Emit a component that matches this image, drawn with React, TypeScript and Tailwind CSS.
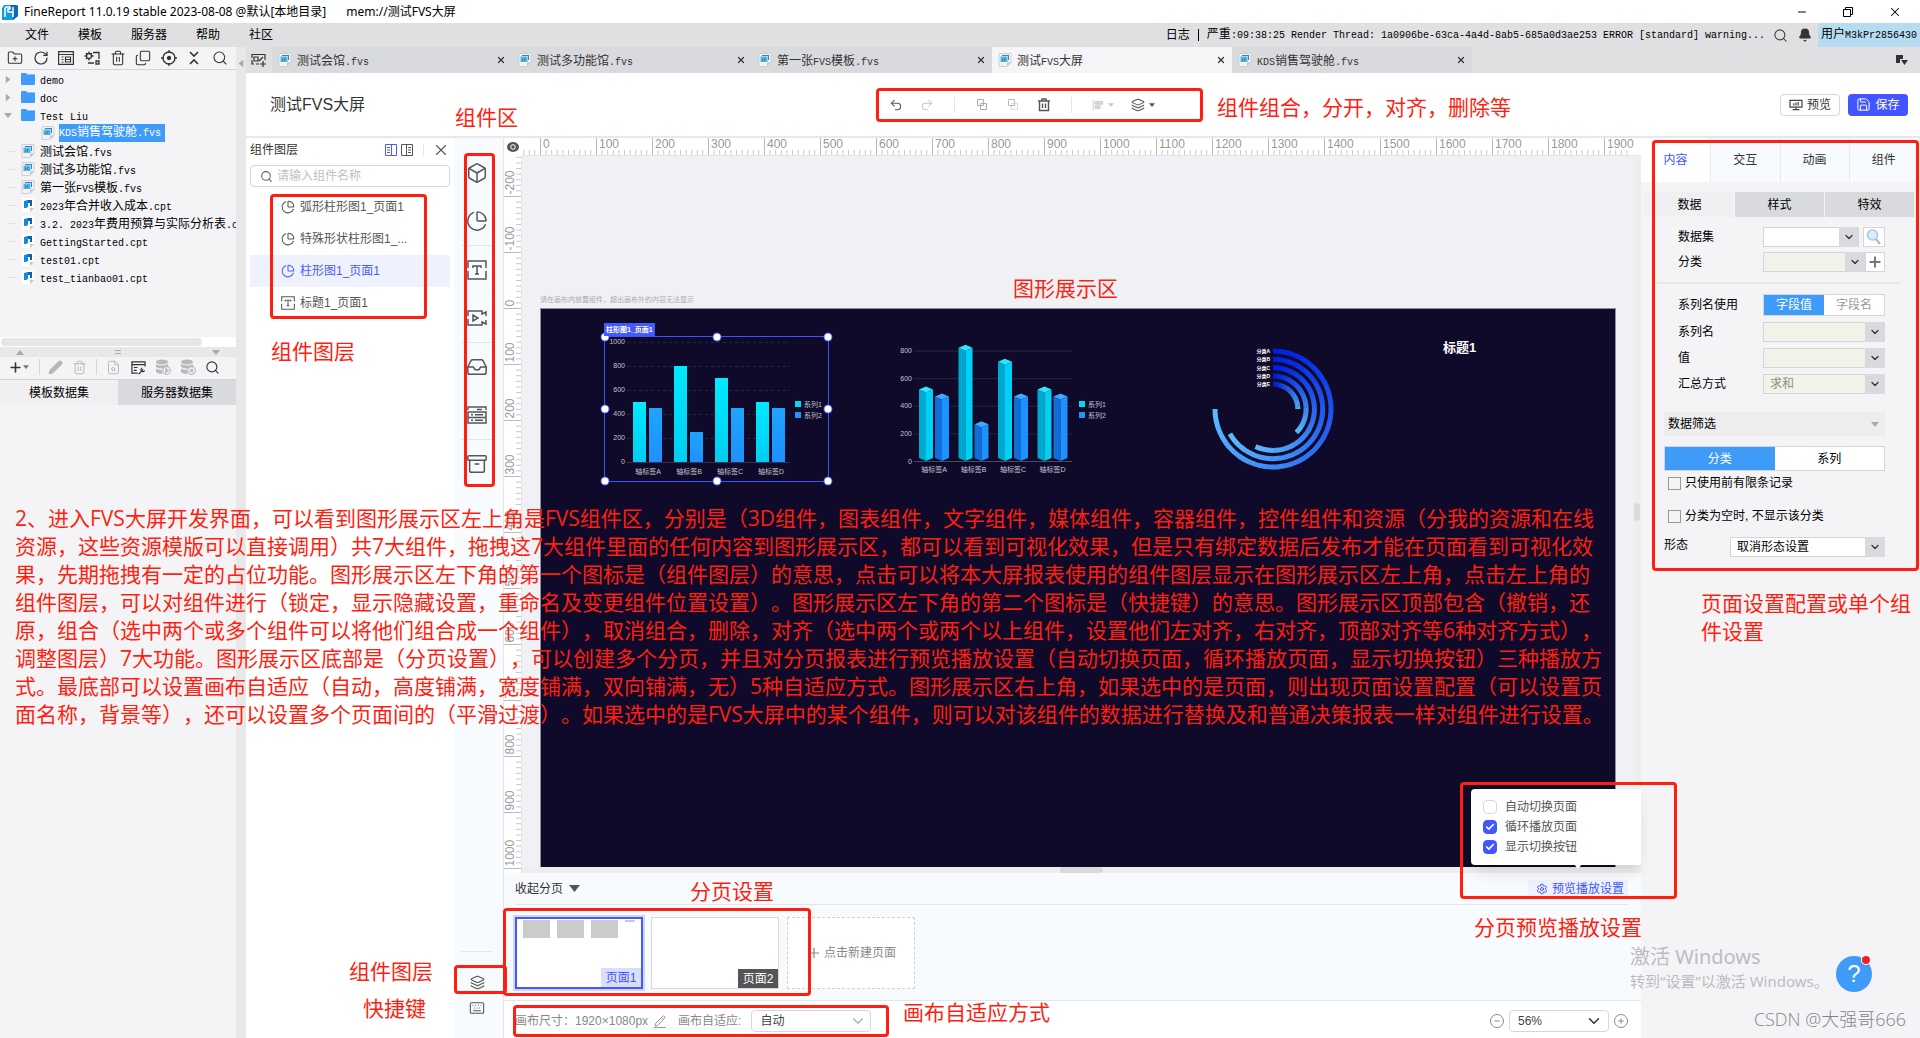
import React from 'react';
import {
  Archive,
  Bell,
  Box,
  Check,
  ChevronDown,
  Copy,
  FileSearch,
  FolderPlus,
  Inbox,
  Layers,
  Keyboard,
  Minus,
  Pencil,
  PieChart,
  Plus,
  Redo2,
  RotateCw,
  Save,
  Search,
  Settings,
  Trash2,
  Undo2,
  X,
} from 'lucide-react';

/* ---------- shared bits ---------- */

// Latin runs are set in a 6px wide mono face next to 12px Chinese glyphs
function Mixed({ text }: { text: string }) {
  const runs = text.match(/[\x20-\x7e]+|[^\x20-\x7e]+/g) ?? [];
  return (
    <span className="whitespace-pre text-xs leading-4">
      {runs.map((run, i) =>
        /^[\x20-\x7e]/.test(run) ? (
          <span key={i} className="font-['Liberation_Mono','DejaVu_Sans_Mono',monospace] text-[10px]">
            {run}
          </span>
        ) : (
          run
        )
      )}
    </span>
  );
}

function Caret({ className }: { className: string }) {
  return (
    <svg viewBox="0 0 8 5" className={className} fill="currentColor">
      <path d="M0 0h8L4 5z" />
    </svg>
  );
}

function FvsIcon() {
  return (
    <svg viewBox="0 0 14 14" className="h-[14px] w-[14px] shrink-0">
      <path d="M1 .5h12v9l-4 4H1z" fill="#f2f2f3" stroke="#cfd0d2" />
      <path d="M9 13.500V9.500h4z" fill="#c5c6c8" />
      <path d="M4 2h7v5h-1V3H4z" fill="#2a86d8" />
      <path d="M2.500 3.500h7v5.500h-7z" fill="#56b0f4" />
      <path d="M4 6h1.200v2H4zM6 5h1.200v3H6z" fill="#3f9b4c" />
    </svg>
  );
}

function CptIcon() {
  return (
    <svg viewBox="0 0 14 14" className="h-[14px] w-[14px] shrink-0">
      <path d="M1 0h12v10l-4 4H1z" fill="#fff" />
      <path d="M9 14v-4h4z" fill="#c5c6c8" />
      <path d="M3 3l4-1v7l-2 1H3z" fill="#1588dc" />
      <path d="M7 2h4v6H9V5H7z" fill="#0a62b4" />
    </svg>
  );
}

function FolderIcon() {
  return (
    <svg viewBox="0 0 14 12" className="h-3 w-[14px] shrink-0">
      <path d="M0 1q0-1 1-1h4l1 1h7q1 0 1 1v9q0 1-1 1H1q-1 0-1-1z" fill="#3f9bf8" />
      <path d="M6 1.500h8" stroke="#8ac4fc" />
    </svg>
  );
}

interface DropdownProps {
  label: string;
  value?: string;
  className: string;
  tone?: string;
}

function Dropdown({ label, value = '', className, tone = 'bg-white text-black' }: DropdownProps) {
  return (
    <div className={`relative h-5 ${className}`}>
      <select
        aria-label={label}
        className={`h-5 w-full appearance-none border border-[#d4d5d8] pl-1.5 text-xs leading-4 ${tone}`}
      >
        <option>{value}</option>
      </select>
      <span className="pointer-events-none absolute inset-y-0 right-0 flex w-5 items-center justify-center bg-[#d9dadd]">
        <ChevronDown className="h-3 w-3 text-[#333]" strokeWidth={2.5} />
      </span>
    </div>
  );
}

/* ---------- top bars ---------- */

function TitleBar() {
  return (
    <div className="flex h-[23px] shrink-0 items-center bg-white font-['Noto_Sans','Noto_Sans_CJK_SC',sans-serif] text-xs leading-4 text-black">
      <svg viewBox="0 0 16 16" className="ml-0.5 h-4 w-4">
        <path d="M2 1h12q2 0 2 2v9l-5 4H0V4z" fill="#129be0" />
        <path d="M8 1h6q2 0 2 2v9l-5 4V8H8z" fill="#0b67b8" />
        <path d="M3 13V5q0-2 2-2h3v2H6v3h5v5M11 3v5" fill="none" stroke="#fff" strokeWidth="1.500" />
      </svg>
      <span className="ml-1.5">FineReport 11.0.19 stable 2023-08-08 @默认[本地目录]</span>
      <span className="ml-5">mem://测试FVS大屏</span>
      <div className="ml-auto flex items-center gap-[34px] pr-[18px]">
        <button aria-label="最小化">
          <Minus className="h-3 w-3" strokeWidth={2} />
        </button>
        <button aria-label="还原">
          <svg viewBox="0 0 12 12" className="h-3 w-3" fill="none" stroke="#000">
            <path d="M1.500 3.500h7v7h-7zM3.500 3.500v-2h7v7h-2" />
          </svg>
        </button>
        <button aria-label="关闭">
          <X className="h-[14px] w-[14px]" strokeWidth={1.8} />
        </button>
      </div>
    </div>
  );
}

const menus = ['文件', '模板', '服务器', '帮助', '社区'];

function MenuBar() {
  return (
    <div className="flex h-6 shrink-0 items-center bg-[#e0e0e2] text-xs leading-4 text-black">
      <nav className="flex gap-[29px] pl-[25px]">
        {menus.map((m) => (
          <button key={m}>{m}</button>
        ))}
      </nav>
      <div className="ml-auto flex h-6 items-center">
        <span>日志</span>
        <span className="mx-2 h-3 w-px bg-black" />
        <span>
          <Mixed text="严重:09:38:25 Render Thread: 1a0906be-63ca-4a4d-8ab5-685a0d3ae253 ERROR [standard] warning..." />
        </span>
        <Search className="ml-2 h-[15px] w-[15px] text-[#444]" strokeWidth={1.8} />
        <Bell className="ml-2.5 h-[14px] w-[14px] text-[#333]" fill="#333" />
        <span className="ml-1.5 flex h-6 items-center bg-[#b7dcf2] px-[3px]">
          <Mixed text="用户M3kPr2856430" />
        </span>
      </div>
    </div>
  );
}

const tabs = ['测试会馆.fvs', '测试多功能馆.fvs', '第一张FVS模板.fvs', '测试FVS大屏', 'KDS销售驾驶舱.fvs'];

function FileTabs() {
  return (
    <div className="flex h-[26px] shrink-0 bg-[#e0e0e2] text-[#333]">
      <button aria-label="新建" className="flex w-[26px] items-center justify-center">
        <svg viewBox="0 0 16 14" className="h-[14px] w-4" fill="none" stroke="#333" strokeWidth="1.200">
          <path d="M1 5V1.500h13V7M1 7v4h2M5 11h3M3 4h4v4H3zM8 8l4-4M9 11h6M12 8v6" />
        </svg>
      </button>
      {tabs.map((t, i) => (
        <div
          key={t}
          className={`flex w-60 items-center pl-1.5 pr-1.5 ${i === 3 ? 'bg-[#f5f5f7]' : 'bg-[#d9dadd]'}`}
        >
          <FvsIcon />
          <span className="ml-[5px]">
            <Mixed text={t} />
          </span>
          <button aria-label={`关闭 ${t}`} className="ml-auto">
            <X className="h-2.5 w-2.5" strokeWidth={3} />
          </button>
        </div>
      ))}
      <div className="ml-auto flex items-center pr-3">
        <svg viewBox="0 0 12 10" className="h-2.5 w-3" fill="#333">
          <path d="M0 0h7v4H4v4H0zM5 5h7l-3.500 5z" />
        </svg>
      </div>
    </div>
  );
}

/* ---------- left column ---------- */

const tree = [
  { name: 'demo', kind: 'folder', open: false },
  { name: 'doc', kind: 'folder', open: false },
  { name: 'Test Liu', kind: 'folder', open: true },
  { name: 'KDS销售驾驶舱.fvs', kind: 'child' },
  { name: '测试会馆.fvs', kind: 'fvs' },
  { name: '测试多功能馆.fvs', kind: 'fvs' },
  { name: '第一张FVS模板.fvs', kind: 'fvs' },
  { name: '2023年合并收入成本.cpt', kind: 'cpt' },
  { name: '3.2. 2023年费用预算与实际分析表.cpt', kind: 'cpt' },
  { name: 'GettingStarted.cpt', kind: 'cpt' },
  { name: 'test01.cpt', kind: 'cpt' },
  { name: 'test_tianbao01.cpt', kind: 'cpt' },
];

function TreeRow({ item }: { item: (typeof tree)[number] }) {
  if (item.kind === 'child') {
    return (
      <li className="flex h-[18px] items-center pl-[41px]">
        <FvsIcon />
        <span className="ml-1 flex h-[18px] items-center bg-[#3f9bf8] pr-1 text-white">
          <Mixed text={item.name} />
        </span>
      </li>
    );
  }
  return (
    <li className="flex h-[18px] items-center overflow-hidden pl-1">
      <span className="flex w-[17px] shrink-0 items-center">
        {item.kind === 'folder' ? (
          <Caret className={item.open ? 'h-[5px] w-2 text-[#aaa]' : 'h-[5px] w-2 -rotate-90 text-[#aaa]'} />
        ) : (
          <span className="ml-1 h-px w-2 bg-[#e2e2e4]" />
        )}
      </span>
      {item.kind === 'folder' && <FolderIcon />}
      {item.kind === 'fvs' && <FvsIcon />}
      {item.kind === 'cpt' && <CptIcon />}
      <span className="ml-[5px]">
        <Mixed text={item.name} />
      </span>
    </li>
  );
}

function DatabaseGlyph({ mark }: { mark: string }) {
  return (
    <svg viewBox="0 0 16 16" className="h-4 w-4">
      <ellipse cx="7" cy="3" rx="6" ry="2.500" fill="#b8b8ba" />
      <path d="M1 5q6 3 12 0v2.500q-3 0-5 2-4 0-7-1.500zM1 9.500q3 1.500 6 1.500-.5 2 .5 4Q3 15 1 13z" fill="#b8b8ba" />
      <circle cx="11.500" cy="11.500" r="3.800" fill="#f4f4f6" stroke="#b8b8ba" strokeWidth="1.200" />
      <path d={mark} fill="none" stroke="#b8b8ba" strokeWidth="1.300" />
    </svg>
  );
}

function LeftColumn() {
  const icon = 'h-4 w-4 text-[#333]';
  const dim = 'h-[15px] w-[15px] text-[#b8b8ba]';
  return (
    <aside className="flex w-[236px] shrink-0 flex-col bg-[#f4f4f6] text-black">
      <div className="flex h-[23px] shrink-0 items-center justify-between border-b border-[#d2d3d6] pl-[7px] pr-2">
        <FolderPlus className={icon} strokeWidth={1.6} />
        <RotateCw className={icon} strokeWidth={1.8} />
        <svg viewBox="0 0 16 16" className={icon} fill="none" stroke="currentColor" strokeWidth="1.200">
          <path d="M.6 1.600h14.800v12.800H.6zM.6 4.500h14.800M3.500 7h2M3.500 9.500h2M3.500 12h2M7.500 7h5v5h-5zM7.500 9.500h5" />
        </svg>
        <svg viewBox="0 0 16 16" className={icon} fill="none" stroke="currentColor" strokeWidth="1.300">
          <circle cx="5" cy="6" r="2.500" />
          <path d="M5 1.500v2M5 8.500v2M.5 6h2M7.500 6h2M2 3l1 1M8 3 7 4M2 9l1-1M9 2.500h6V9M4 13h6M12 11h3v3h-3z" />
        </svg>
        <Trash2 className={icon} strokeWidth={1.6} />
        <Copy className="h-4 w-4 -scale-y-100 text-[#333]" strokeWidth={1.6} />
        <svg viewBox="0 0 16 16" className={icon} fill="none" stroke="currentColor" strokeWidth="1.300">
          <circle cx="8" cy="8" r="6" />
          <circle cx="8" cy="8" r="1.500" fill="currentColor" />
          <path d="M8 0v3M8 13v3M0 8h3M13 8h3" />
        </svg>
        <svg viewBox="0 0 16 16" className={icon} fill="none" stroke="currentColor" strokeWidth="1.600">
          <path d="m4 2 4 4 4-4M4 14l4-4 4 4" />
        </svg>
        <Search className={icon} strokeWidth={1.6} />
      </div>
      <ul className="h-[267px] shrink-0 overflow-hidden">
        {tree.map((item) => (
          <TreeRow key={item.name} item={item} />
        ))}
      </ul>
      <div className="flex h-2.5 shrink-0 items-center bg-white px-px">
        <span className="h-2 w-[201px] rounded bg-[#e6e6e7]" />
      </div>
      <div className="flex h-2.5 shrink-0 items-center justify-between bg-[#e8e8e8] px-4 text-[#aaa]">
        <Caret className="h-[5px] w-2 rotate-180" />
        <span className="h-1 w-1.5 border-y border-[#aaa]" />
        <Caret className="h-[5px] w-2" />
      </div>
      <div className="flex h-[23px] shrink-0 items-center border-b border-[#d2d3d6] pb-0.5 pl-2">
        <Plus className="h-[15px] w-[15px] text-[#333]" strokeWidth={2.5} />
        <Caret className="h-1 w-1.5 text-[#777]" />
        <span className="ml-2.5 h-4 w-px bg-[#d6d6d8]" />
        <div className="flex flex-1 items-center justify-between pl-2 pr-4">
          <Pencil className={dim} fill="#b8b8ba" />
          <Trash2 className={dim} strokeWidth={1.6} />
          <span className="h-4 w-px bg-[#d6d6d8]" />
          <FileSearch className={dim} strokeWidth={1.6} />
          <svg viewBox="0 0 16 16" className="h-[15px] w-[15px] text-[#333]" fill="none" stroke="currentColor" strokeWidth="1.300">
            <path d="M15 7V2H1v12h6M1 5h14M3 8h4M3 11h3" />
            <path d="m9 14 4-4M12 8.500a2 2 0 1 0 2.500 2.500M8 15l2-1" />
          </svg>
          <DatabaseGlyph mark="M10.700 9.800v3.400l2.300-1.700z" />
          <DatabaseGlyph mark="m10 10 3 3M13 10l-3 3" />
          <Search className="h-[15px] w-[15px] text-[#333]" strokeWidth={1.8} />
        </div>
      </div>
      <div className="grid h-[25px] shrink-0 grid-cols-2 text-xs leading-4">
        <button className="bg-[#f0f0f2]">模板数据集</button>
        <button className="bg-[#d9dadd]">服务器数据集</button>
      </div>
    </aside>
  );
}

/* ---------- designer header ---------- */

function DesignerHeader() {
  return (
    <header className="flex h-[65px] shrink-0 items-center border-b-2 border-[#e6e8ed] bg-white pl-6 pr-3">
      <h1 className="w-[619px] shrink-0 text-base leading-6 text-[#333]">测试FVS大屏</h1>
      <div className="flex items-center gap-[17px] text-[#c8c8ca]">
        <Undo2 className="h-[14px] w-[14px] text-[#555]" strokeWidth={1.8} />
        <Redo2 className="h-[14px] w-[14px]" strokeWidth={1.8} />
        <span className="mx-[3px] h-4 w-px bg-[#e4e4e6]" />
        <svg viewBox="0 0 14 14" className="h-[14px] w-[14px]" fill="none" stroke="#aaa">
          <path d="M2.500 1.500h6v6h-6zM5.500 5.500h6v6h-6z" />
        </svg>
        <svg viewBox="0 0 14 14" className="h-[14px] w-[14px]" fill="none" stroke="#bbb">
          <path d="M2.500 1.500h6v6h-6z" />
          <path d="M5.500 5.500h6v6h-6z" strokeDasharray="1 1" />
        </svg>
        <svg viewBox="0 0 14 14" className="h-[14px] w-[14px]" fill="none" stroke="#555" strokeWidth="1.400">
          <path d="M1 3h12M5 3V1h4v2M2.500 3v9.500h9V3M5.500 5.500V10M8.500 5.500V10" />
        </svg>
        <span className="mx-[3px] h-4 w-px bg-[#e4e4e6]" />
        <span className="flex items-center gap-1">
          <svg viewBox="0 0 14 14" className="h-3 w-3" fill="#d8d8da" stroke="#c8c8ca">
            <path d="M1.500 1v12M3.500 3h9v3h-9zM3.500 8h6v3h-6z" />
          </svg>
          <Caret className="h-1 w-1.5" />
        </span>
        <span className="flex items-center gap-1 text-[#555]">
          <Layers className="h-[14px] w-[14px]" strokeWidth={1.8} />
          <Caret className="h-1 w-1.5" />
        </span>
      </div>
      <div className="ml-auto flex gap-2 text-xs leading-4">
        <button className="flex h-[22px] w-[60px] items-center justify-center gap-1 rounded-sm border border-[#d6d7da] bg-white text-[#333]">
          <svg viewBox="0 0 16 14" className="h-3 w-[14px]" fill="none" stroke="#444" strokeWidth="1.400">
            <path d="M1 1.500h14v8H1zM4 12.500h8M8 10v2M5.500 5v2.500M8 4v3.500M10.500 3.500v4" />
          </svg>
          预览
        </button>
        <button className="flex h-[22px] w-[60px] items-center justify-center gap-1 rounded-sm bg-[#4255ff] text-white">
          <Save className="h-[15px] w-[15px]" strokeWidth={1.6} />
          保存
        </button>
      </div>
    </header>
  );
}

/* ---------- layer panel and component bar ---------- */

const layers = ['弧形柱形图1_页面1', '特殊形状柱形图1_...', '柱形图1_页面1', '标题1_页面1'];

function TextGlyph({ className }: { className: string }) {
  return (
    <svg viewBox="0 0 20 20" className={className} fill="none" stroke="currentColor" strokeWidth="1.500">
      <path d="M1 8V1h18v7M1 11v8h18v-8M6 8V6h8v2M10 6v8M8 14h4" />
    </svg>
  );
}

function LayerPanel() {
  return (
    <section className="w-[208px] shrink-0 bg-white px-1 text-xs leading-4">
      <div className="flex h-[27px] items-center pb-1">
        <h2 className="text-[#333]">组件图层</h2>
        <svg viewBox="0 0 12 12" className="ml-auto h-3 w-3" fill="none" stroke="#4a5cff">
          <path d="M.5.5h11v11H.5zM6.500 1v10M2 3.500h3M2 6h3M2 8.500h3" />
        </svg>
        <svg viewBox="0 0 12 12" className="ml-1 h-3 w-3" fill="none" stroke="#555">
          <path d="M.5.5h11v11H.5zM5.500 1v10M7 3.500h3M7 6h3M7 8.500h3" />
        </svg>
        <span className="ml-2.5 h-3 w-px bg-[#e6e6e8]" />
        <button aria-label="关闭图层" className="ml-2">
          <X className="h-[18px] w-[18px] text-[#555]" strokeWidth={1.5} />
        </button>
      </div>
      <label className="flex h-[22px] items-center rounded-sm border border-[#d6d7da] pl-[9px]">
        <Search className="h-[13px] w-[13px] text-[#666]" strokeWidth={2} />
        <input
          aria-label="组件名称"
          placeholder="请输入组件名称"
          className="ml-1 w-40 text-xs leading-4 outline-none placeholder:text-[#bfbfc2]"
        />
      </label>
      <ul className="mt-1">
        {layers.map((name, i) => (
          <li
            key={name}
            className={`flex h-8 items-center gap-[5px] pl-[31px] ${
              i === 2 ? 'bg-[#eff2fd] text-[#4a5cff]' : 'text-[#555]'
            }`}
          >
            {i === 3 ? (
              <TextGlyph className="h-[14px] w-[14px]" />
            ) : (
              <PieChart className="h-[14px] w-[14px]" strokeWidth={1.8} />
            )}
            {name}
          </li>
        ))}
      </ul>
    </section>
  );
}

function VideoGlyph() {
  return (
    <svg viewBox="0 0 20 20" className="h-5 w-5" fill="none" stroke="currentColor" strokeWidth="1.500">
      <path d="M1 8V3h14v3l4-2v4M1 11v6h14v-3l4 2v-4M6 7v6l5-3z" />
    </svg>
  );
}

function ControlGlyph() {
  return (
    <svg viewBox="0 0 20 20" className="h-5 w-5" fill="none" stroke="currentColor" strokeWidth="1.500">
      <path d="M1 5V2h18v3M1 7h18v5.500H1zM1 12.500h18V18H1zM10 4.500h5M4 9.700h2M8 9.700h8M4 15.200h2M8 15.200h8" />
    </svg>
  );
}

const groups = [
  [<Box className="h-[22px] w-[22px]" strokeWidth={1.6} />, <PieChart className="h-[22px] w-[22px]" strokeWidth={1.6} />],
  [<TextGlyph className="h-5 w-5" />, <VideoGlyph />],
  [<Inbox className="h-[22px] w-[22px]" strokeWidth={1.6} />, <ControlGlyph />],
  [<Archive className="h-[22px] w-[22px]" strokeWidth={1.6} />],
];
const groupNames = [
  ['3D组件', '图表组件'],
  ['文字组件', '媒体组件'],
  ['容器组件', '控件组件'],
  ['资源'],
];

function ComponentBar() {
  return (
    <nav className="flex w-[50px] shrink-0 flex-col border-r border-[#e2e6ec] bg-[#f7fbfe] pl-[7px] pr-2.5 pt-[11px] text-[#555]">
      {groups.map((icons, g) => (
        <div key={g} className="border-b border-[#e4e7ea] last-of-type:border-0">
          {icons.map((glyph, i) => (
            <button key={i} aria-label={groupNames[g][i]} className="flex h-12 w-full items-center justify-center">
              {glyph}
            </button>
          ))}
        </div>
      ))}
      <footer className="mt-auto flex h-[87px] flex-col items-center border-t border-[#e4e7ea] pt-[23px]">
        <button aria-label="组件图层">
          <Layers className="h-[15px] w-[15px]" strokeWidth={1.8} />
        </button>
        <button aria-label="快捷键" className="mt-2.5">
          <Keyboard className="h-4 w-4" strokeWidth={1.6} />
        </button>
      </footer>
    </nav>
  );
}

/* ---------- rulers ---------- */

const STEP = 56;

function TopRuler() {
  const majors = Array.from({ length: 20 }, (_, i) => i);
  const minors = Array.from({ length: 198 }, (_, i) => i - 3);
  return (
    <svg className="h-[18px] min-w-0 flex-1 border-b border-[#e2e5ea] bg-white">
      {minors.map((m) => (
        <path key={m} d={`M${18.5 + (m * STEP) / 10} 12v6`} stroke="#c8c9cb" />
      ))}
      {majors.map((m) => (
        <g key={m}>
          <path d={`M${18.5 + m * STEP} 0v18`} stroke="#b9babd" />
          <text x={21 + m * STEP} y="10" fontSize="12" fill="#999">
            {m * 100}
          </text>
        </g>
      ))}
    </svg>
  );
}

function SideRuler() {
  const majors = Array.from({ length: 13 }, (_, i) => i - 2);
  const minors = Array.from({ length: 127 }, (_, i) => i - 27);
  return (
    <svg className="w-[18px] shrink-0 border-r border-[#e2e5ea] bg-white">
      {minors.map((m) => (
        <path key={m} d={`M12 ${152.5 + (m * STEP) / 10}h6`} stroke="#c8c9cb" />
      ))}
      {majors.map((m) => {
        const y = 152.5 + m * STEP;
        return (
          <g key={m}>
            <path d={`M0 ${y}h18`} stroke="#b9babd" />
            <text transform={`translate(10 ${y - 2}) rotate(-90)`} fontSize="12" fill="#999">
              {m * 100}
            </text>
          </g>
        );
      })}
    </svg>
  );
}

/* ---------- charts on the stage ---------- */

const axis = ['A', 'B', 'C', 'D'];
const series = [
  [500, 450],
  [800, 250],
  [700, 450],
  [500, 450],
];

function Legend({ x, y }: { x: number; y: number }) {
  return (
    <g fontSize="7" fill="#c4c3ce">
      <rect x={x} y={y} width="6" height="6" fill="#00d8f4" />
      <rect x={x} y={y + 11} width="6" height="6" fill="#1e96fa" />
      <text x={x + 9} y={y + 6}>系列1</text>
      <text x={x + 9} y={y + 17}>系列2</text>
    </g>
  );
}

function BarChart() {
  return (
    <svg viewBox="0 0 225 146" className="h-[146px] w-[225px]">
      <defs>
        <linearGradient id="cyan" x1="0" y1="0" x2="0" y2="1">
          <stop offset="0" stopColor="#00eaff" />
          <stop offset="1" stopColor="#00cdf2" />
        </linearGradient>
        <linearGradient id="blue" x1="0" y1="0" x2="0" y2="1">
          <stop offset="0" stopColor="#1ea5fa" />
          <stop offset="1" stopColor="#1e90ff" />
        </linearGradient>
      </defs>
      {[0, 200, 400, 600, 800, 1000].map((v) => {
        const y = 126 - v * 0.12;
        return (
          <g key={v}>
            <path d={`M23 ${y + 0.5}h163`} stroke={v ? '#1d2b41' : '#2e3350'} strokeDasharray={v ? '3 3' : undefined} />
            <text x="21" y={y + 2} fontSize="7" fill="#c4c3ce" textAnchor="end">
              {v}
            </text>
          </g>
        );
      })}
      {series.map(([a, b], i) => (
        <g key={i}>
          <rect x={29 + i * 41} y={126 - a * 0.12} width="13" height={a * 0.12} fill="url(#cyan)" />
          <rect x={45 + i * 41} y={126 - b * 0.12} width="13" height={b * 0.12} fill="url(#blue)" />
          <text x={44 + i * 41} y="138" fontSize="7" fill="#c4c3ce" textAnchor="middle">
            {`轴标签${axis[i]}`}
          </text>
        </g>
      ))}
      <Legend x={191} y={65} />
    </svg>
  );
}

function Prism({ x, top, shades }: { x: number; top: number; shades: string[] }) {
  const m = x + 7;
  return (
    <g>
      <path d={`M${x} ${top + 3}L${m} ${top + 6}V121L${x} 118z`} fill={shades[0]} />
      <path d={`M${m} ${top + 6}L${x + 14} ${top + 3}V118L${m} 121z`} fill={shades[1]} />
      <path d={`M${x} ${top + 3}L${m} ${top}L${x + 14} ${top + 3}L${m} ${top + 6}z`} fill={shades[2]} />
    </g>
  );
}

function PrismChart() {
  return (
    <svg viewBox="0 0 210 136" className="h-[136px] w-[210px]">
      {[0, 200, 400, 600, 800].map((v) => {
        const y = 121.5 - v * 0.138;
        return (
          <g key={v}>
            <path d={`M14 ${y}h158`} stroke={v ? '#25263f' : '#4b4a60'} />
            <text x="12" y={y + 2} fontSize="7" fill="#c4c3ce" textAnchor="end">
              {v}
            </text>
          </g>
        );
      })}
      {series.map(([a, b], i) => (
        <g key={i}>
          <Prism x={19 + i * 39.5} top={116 - a * 0.139} shades={['#00a8cf', '#00d0f5', '#2fe6ff']} />
          <Prism x={35 + i * 39.5} top={116 - b * 0.139} shades={['#0f6fd6', '#1e90ff', '#43a8ff']} />
          <text x={34 + i * 39.5} y="132" fontSize="7" fill="#c4c3ce" textAnchor="middle">
            {`轴标签${axis[i]}`}
          </text>
        </g>
      ))}
      <Legend x={179} y={61} />
    </svg>
  );
}

const rings = [
  { name: '分类A', r: 58, sweep: 270 },
  { name: '分类B', r: 49.7, sweep: 240 },
  { name: '分类C', r: 41.4, sweep: 205 },
  { name: '分类D', r: 33.1, sweep: 135 },
  { name: '分类E', r: 24.8, sweep: 90 },
];

function RingChart() {
  const slices = 45;
  const point = (r: number, deg: number) => {
    const a = (deg * Math.PI) / 180;
    return `${61 + r * Math.sin(a)} ${61 - r * Math.cos(a)}`;
  };
  return (
    <svg viewBox="0 0 122 122" className="h-[122px] w-[122px]">
      {rings.map(({ name, r, sweep }) => (
        <g key={name}>
          {Array.from({ length: slices }, (_, i) => {
            const from = (sweep * i) / slices;
            const to = Math.min(sweep, (sweep * (i + 1)) / slices + 0.5);
            const t = i / (slices - 1);
            const color = `rgb(${Math.round(90 * t)}, ${Math.round(30 + 158 * t)}, ${Math.round(225 + 30 * t)})`;
            return (
              <path key={i} d={`M${point(r, from)}A${r} ${r} 0 0 1 ${point(r, to)}`} fill="none" stroke={color} strokeWidth="5" />
            );
          })}
          <text x="58" y={63 - r} fontSize="5" fontWeight="700" fill="#fff" textAnchor="end">
            {name}
          </text>
        </g>
      ))}
    </svg>
  );
}

const handles = [
  'left-0 top-0',
  'left-1/2 top-0',
  'left-full top-0',
  'left-0 top-1/2',
  'left-full top-1/2',
  'left-0 top-full',
  'left-1/2 top-full',
  'left-full top-full',
];

function Stage() {
  return (
    <div className="flex min-w-0 flex-1 flex-col bg-[#f0f1f5] px-[18px]">
      <p className="flex h-[152px] shrink-0 items-end whitespace-nowrap pb-0.5 text-[7px] leading-3 text-[#aaabb0]">
        请在画布内放置组件，超出画布外的内容无法显示
      </p>
      <div className="relative flex-1 border border-b-0 border-[#8f8fa0] bg-[#0f0a29]">
        <div className="absolute left-[63px] top-[27px]">
          <BarChart />
          <div className="absolute inset-0 border border-[#4253f0]">
            {handles.map((pos) => (
              <span key={pos} className={`absolute h-[7px] w-[7px] -translate-1/2 rounded-full bg-white ring-1 ring-[#4459fb] ${pos}`} />
            ))}
          </div>
          <span className="absolute -top-[13px] left-0 flex h-[13px] items-center whitespace-nowrap bg-[#4459fb] px-0.5 text-[7px] font-bold leading-3 text-white">
            柱形图1_页面1
          </span>
        </div>
        <div className="absolute left-[359px] top-[31px]">
          <PrismChart />
        </div>
        <div className="absolute left-[671px] top-[39px]">
          <RingChart />
        </div>
        <p className="absolute left-[902px] top-[29px] text-[13px] font-bold leading-5 text-white">标题1</p>
      </div>
    </div>
  );
}

/* ---------- pages strip and footer ---------- */

const playOptions = [
  { label: '自动切换页面', on: false },
  { label: '循环播放页面', on: true },
  { label: '显示切换按钮', on: true },
];

function PlayPopup() {
  return (
    <div className="absolute -top-[84px] right-0 h-[76px] w-[170px] rounded-l-sm bg-white pl-3 pt-2 text-xs leading-4 text-[#555] shadow-lg">
      {playOptions.map(({ label, on }) => (
        <label key={label} className="flex h-5 items-center gap-2">
          <span className="relative flex h-[14px] w-[14px]">
            <input
              type="checkbox"
              defaultChecked={on}
              className="h-[14px] w-[14px] appearance-none rounded-sm border border-[#d6d7da] checked:border-[#4255ff] checked:bg-[#4255ff]"
            />
            {on && <Check className="pointer-events-none absolute inset-0.5 h-2.5 w-2.5 text-white" strokeWidth={4} />}
          </span>
          {label}
        </label>
      ))}
      <Caret className="absolute -bottom-1 left-[103px] h-[5px] w-2 text-white" />
    </div>
  );
}

function PagesStrip() {
  return (
    <div className="relative h-[128px] shrink-0 border-b border-[#e2e5ea] bg-[#f7fbfe] pl-[11px] pr-[13px] text-xs leading-4">
      <div className="flex h-8 items-center border-b border-[#e2e5ea]">
        <button className="flex items-center gap-1.5 text-[#333]">
          收起分页
          <Caret className="h-[7px] w-[11px] text-[#555]" />
        </button>
        <button className="ml-auto flex h-[18px] w-[100px] items-center justify-end gap-1 bg-[#eff2fd] pr-1 text-[#4255ff]">
          <Settings className="h-3 w-3" strokeWidth={2} />
          预览播放设置
        </button>
      </div>
      <div className="mt-3 flex gap-2">
        <div className="flex h-[72px] w-32 flex-col justify-between border-2 border-[#4459fb] bg-white ring-2 ring-[#cfd5fd]">
          <div className="flex items-start gap-[7px] pl-1.5 pt-px">
            <span className="h-[18px] w-[27px] bg-[#cbcbcb]" />
            <span className="h-[18px] w-[27px] bg-[#cbcbcb]" />
            <span className="h-[18px] w-[27px] bg-[#cbcbcb]" />
            <span className="h-0.5 w-2.5 bg-[#cbcbcb]" />
          </div>
          <span className="flex h-[19px] w-10 items-center justify-center self-end bg-[#d9defe] text-[#4255ff]">页面1</span>
        </div>
        <div className="flex h-[72px] w-32 items-end justify-end border border-[#d6d7da] bg-white">
          <span className="flex h-[19px] w-10 items-center justify-center bg-[#555] text-white">页面2</span>
        </div>
        <button className="flex h-[72px] w-32 items-center justify-center gap-0.5 border border-dashed border-[#d0d1d4] bg-white text-[#888]">
          <Plus className="h-4 w-4" strokeWidth={1.8} />
          点击新建页面
        </button>
      </div>
      <PlayPopup />
    </div>
  );
}

function CanvasFooter() {
  return (
    <div className="flex h-[37px] shrink-0 items-center bg-white pb-px pl-[11px] pr-[13px] pt-1 text-xs leading-4 text-[#888]">
      <span className="whitespace-nowrap">画布尺寸：1920×1080px</span>
      <button aria-label="编辑尺寸" className="ml-1.5 border-b border-[#999]">
        <Pencil className="h-3 w-3" strokeWidth={1.8} />
      </button>
      <label htmlFor="fit" className="ml-3 whitespace-nowrap">画布自适应:</label>
      <div className="relative ml-2.5">
        <select id="fit" className="h-[22px] w-[120px] appearance-none rounded-sm border border-[#d6d7da] bg-white pl-2 text-xs leading-4 text-[#444]">
          <option>自动</option>
        </select>
        <ChevronDown className="pointer-events-none absolute right-1 top-0.5 h-[18px] w-[18px] text-[#aaa]" strokeWidth={1.5} />
      </div>
      <div className="ml-auto flex items-center gap-[5px]">
        <button aria-label="缩小" className="flex h-[14px] w-[14px] items-center justify-center rounded-full border border-[#888]">
          <Minus className="h-2 w-2" strokeWidth={3} />
        </button>
        <div className="relative">
          <select aria-label="缩放" className="h-[22px] w-[100px] appearance-none rounded-sm border border-[#d6d7da] bg-white pl-2 text-xs leading-4 text-[#444]">
            <option>56%</option>
          </select>
          <ChevronDown className="pointer-events-none absolute right-1.5 top-0.5 h-[18px] w-[18px] text-[#333]" strokeWidth={2} />
        </div>
        <button aria-label="放大" className="flex h-[14px] w-[14px] items-center justify-center rounded-full border border-[#888]">
          <Plus className="h-2 w-2" strokeWidth={3} />
        </button>
      </div>
    </div>
  );
}

function CanvasArea() {
  return (
    <main className="flex min-w-0 flex-1 flex-col">
      <div className="flex shrink-0">
        <div className="flex h-[18px] w-[18px] shrink-0 items-center justify-center bg-white">
          <svg viewBox="0 0 12 10" className="h-2.5 w-3">
            <ellipse cx="6" cy="5" rx="6" ry="5" fill="#555" />
            <circle cx="6" cy="5" r="2.300" fill="none" stroke="#fff" />
          </svg>
        </div>
        <TopRuler />
      </div>
      <div className="flex min-h-0 flex-1">
        <SideRuler />
        <div className="flex min-w-0 flex-1 flex-col">
          <div className="flex min-h-0 flex-1">
            <Stage />
            <div className="flex w-[7px] shrink-0 items-center bg-[#eeeeef]">
              <span className="h-[18px] w-1.5 rounded bg-[#dadadc]" />
            </div>
          </div>
          <div className="flex h-1.5 shrink-0 justify-center bg-[#eeeeef]">
            <span className="h-1.5 w-[43px] rounded bg-[#dadadc]" />
          </div>
        </div>
      </div>
      <PagesStrip />
      <CanvasFooter />
    </main>
  );
}

/* ---------- property panel ---------- */

const disabledTone = 'bg-[#f2f2e9] text-[#8c8c8c]';

function PropertyPanel() {
  return (
    <aside className="w-[279px] shrink-0 bg-[#f4f4f6] text-xs leading-4 text-black">
      <div className="grid h-11 grid-cols-4 pr-0.5 text-[#333]">
        <button className="bg-white text-[#4255ff]">内容</button>
        <button className="border-l border-[#e6ebf0] bg-[#f7fbfe]">交互</button>
        <button className="border-l border-[#e6ebf0] bg-[#f7fbfe]">动画</button>
        <button className="border-l border-[#e6ebf0] bg-[#f7fbfe]">组件</button>
      </div>
      <div className="mt-2.5 grid h-[25px] grid-cols-3 gap-px pl-1 pr-1.5">
        <button className="bg-[#f0f0f2]">数据</button>
        <button className="bg-[#d9dadd]">样式</button>
        <button className="bg-[#d9dadd]">特效</button>
      </div>

      <div className="pl-[37px] pr-[35px]">
        <div className="mt-2.5 flex h-5 items-center">
          <span className="w-[85px]">数据集</span>
          <Dropdown label="数据集" className="w-24" />
          <button aria-label="预览数据" className="ml-1 flex h-5 w-[22px] items-center justify-center border border-[#d4d5d8] bg-white">
            <svg viewBox="0 0 16 16" className="h-4 w-4" fill="none">
              <path d="m9 9 5 6" stroke="#b5b5b5" strokeWidth="2" />
              <circle cx="6.500" cy="6" r="5" fill="#d8ecfa" stroke="#a9c6e6" strokeWidth="1.500" />
            </svg>
          </button>
        </div>
        <div className="mt-[5px] flex h-5 items-center">
          <span className="w-[85px]">分类</span>
          <Dropdown label="分类" tone={disabledTone} className="w-[102px]" />
          <button aria-label="添加分类" className="flex h-5 w-5 items-center justify-center border border-[#d4d5d8] bg-white">
            <Plus className="h-4 w-4 text-[#777]" strokeWidth={3} />
          </button>
        </div>
      </div>

      <hr className="ml-3.5 mr-5 mt-2.5 border-t-2 border-[#e9e9de]" />

      <div className="flex flex-col gap-1.5 pl-[37px] pr-[35px] pt-2.5">
        <div className="flex h-[22px] items-center">
          <span className="w-[85px]">系列名使用</span>
          <div className="flex h-[22px] w-[122px] border border-[#d4d5d8] bg-white">
            <button className="flex-1 bg-[#3f9bf8] text-white">字段值</button>
            <button className="flex-1 text-[#999]">字段名</button>
          </div>
        </div>
        <div className="flex h-5 items-center">
          <span className="w-[85px]">系列名</span>
          <Dropdown label="系列名" tone={disabledTone} className="w-[122px]" />
        </div>
        <div className="flex h-5 items-center">
          <span className="w-[85px]">值</span>
          <Dropdown label="值" tone={disabledTone} className="w-[122px]" />
        </div>
        <div className="flex h-5 items-center">
          <span className="w-[85px]">汇总方式</span>
          <Dropdown label="汇总方式" value="求和" tone={disabledTone} className="w-[122px]" />
        </div>
      </div>

      <div className="pl-[23px] pr-[35px] pt-[18px]">
        <button className="flex h-6 w-full items-center justify-between bg-[#ededed] pl-1 pr-1.5">
          数据筛选
          <Caret className="h-[5px] w-2 text-[#aaa]" />
        </button>
        <div className="mt-2.5 flex h-[25px] border border-[#d4d5d8] bg-white">
          <button className="flex-1 bg-[#3f9bf8] text-white">分类</button>
          <button className="flex-1">系列</button>
        </div>
        <label className="mt-1 flex h-4 items-center gap-1 pl-1">
          <input type="checkbox" className="h-[13px] w-[13px] appearance-none border border-[#999] bg-[#f4f4f6]" />
          只使用前有限条记录
        </label>
        <label className="mt-[17px] flex h-4 items-center gap-1 pl-1">
          <input type="checkbox" className="h-[13px] w-[13px] appearance-none border border-[#999] bg-[#f4f4f6]" />
          分类为空时, 不显示该分类
        </label>
        <div className="mt-[13px] flex h-5 items-start justify-between">
          <span>形态</span>
          <Dropdown label="形态" value="取消形态设置" className="w-[155px]" />
        </div>
      </div>
    </aside>
  );
}

/* ---------- red annotations ---------- */

const paragraph = [
  '2、进入FVS大屏开发界面，可以看到图形展示区左上角是FVS组件区，分别是（3D组件，图表组件，文字组件，媒体组件，容器组件，控件组件和资源（分我的资源和在线',
  '资源，这些资源模版可以直接调用）共7大组件，拖拽这7大组件里面的任何内容到图形展示区，都可以看到可视化效果，但是只有绑定数据后发布才能在页面看到可视化效',
  '果，先期拖拽有一定的占位功能。图形展示区左下角的第一个图标是（组件图层）的意思，点击可以将本大屏报表使用的组件图层显示在图形展示区左上角，点击左上角的',
  '组件图层，可以对组件进行（锁定，显示隐藏设置，重命名及变更组件位置设置）。图形展示区左下角的第二个图标是（快捷键）的意思。图形展示区顶部包含（撤销，还',
  '原，组合（选中两个或多个组件可以将他们组合成一个组件），取消组合，删除，对齐（选中两个或两个以上组件，设置他们左对齐，右对齐，顶部对齐等6种对齐方式），',
  '调整图层）7大功能。图形展示区底部是（分页设置），可以创建多个分页，并且对分页报表进行预览播放设置（自动切换页面，循环播放页面，显示切换按钮）三种播放方',
  '式。最底部可以设置画布自适应（自动，高度铺满，宽度铺满，双向铺满，无）5种自适应方式。图形展示区右上角，如果选中的是页面，则出现页面设置配置（可以设置页',
  '面名称，背景等），还可以设置多个页面间的（平滑过渡）。如果选中的是FVS大屏中的某个组件，则可以对该组件的数据进行替换及和普通决策报表一样对组件进行设置。',
];

const frames = [
  'left-[270px] top-[194px] h-[125px] w-[157px]',
  'left-[464px] top-[153px] h-[334px] w-[31px]',
  'left-[876px] top-[88px] h-[34px] w-[327px]',
  'right-px top-[140px] h-[431px] w-[267px]',
  'right-[243px] bottom-[139px] h-[117px] w-[217px]',
  'left-[503px] bottom-[42px] h-[88px] w-[308px]',
  'left-[454px] bottom-[44px] h-[29px] w-[53px]',
  'left-[513px] bottom-px h-[32px] w-[376px]',
];

const notes = [
  { text: '组件区', at: 'left-[455px] top-[103px]' },
  { text: '组件组合，分开，对齐，删除等', at: 'left-[1217px] top-[93px]' },
  { text: '组件图层', at: 'left-[271px] top-[337px]' },
  { text: '图形展示区', at: 'left-[1013px] top-[274px]' },
  { text: '分页设置', at: 'left-[690px] bottom-[133px]' },
  { text: '组件图层', at: 'left-[349px] bottom-[53px]' },
  { text: '快捷键', at: 'left-[363px] bottom-[16px]' },
  { text: '画布自适应方式', at: 'left-[903px] bottom-[12px]' },
  { text: '分页预览播放设置', at: 'right-[278px] bottom-[97px]' },
];

function Annotations() {
  return (
    <div className="pointer-events-none absolute inset-0 overflow-hidden whitespace-nowrap font-['Open_Sans','Noto_Sans_CJK_SC',sans-serif] text-[21px] leading-7 text-[#ff1e0f] [text-spacing-trim:space-all]">
      {frames.map((f) => (
        <div key={f} className={`absolute rounded-sm border-3 border-[#ff1e0f] ${f}`} />
      ))}
      {notes.map((n) => (
        <p key={n.at} className={`absolute ${n.at}`}>
          {n.text}
        </p>
      ))}
      <p className="absolute right-[9px] top-[589px]">
        页面设置配置或单个组
        <br />
        件设置
      </p>
      <div className="absolute left-[15px] top-[504px]">
        {paragraph.map((line) => (
          <p key={line}>{line}</p>
        ))}
      </div>
    </div>
  );
}

function Watermarks() {
  return (
    <div className="pointer-events-none absolute bottom-[7px] right-[14px] w-[276px] whitespace-nowrap font-['Noto_Sans','Noto_Sans_CJK_SC',sans-serif] text-[#bcbcbe]">
      <p className="text-xl leading-6">激活 Windows</p>
      <p className="text-[15px] leading-6">转到“设置”以激活 Windows。</p>
      <p className="mt-3.5 text-right font-['Open_Sans','Noto_Sans_CJK_SC',sans-serif] text-lg font-light leading-6 text-[#858587]">
        CSDN @大强哥666
      </p>
    </div>
  );
}

function HelpButton() {
  return (
    <button
      aria-label="帮助"
      className="absolute bottom-[46px] right-12 h-9 w-9 rounded-full bg-[#3f9bf8] text-2xl leading-9 text-white"
    >
      ?
      <span className="absolute right-0.5 top-0 h-2 w-2 rounded-full bg-[#f01e28] ring-1 ring-white" />
    </button>
  );
}

export default function App() {
  return (
    <div className="relative flex h-screen flex-col overflow-hidden bg-white font-['Liberation_Sans','Noto_Sans_CJK_SC',sans-serif]">
      <TitleBar />
      <MenuBar />
      <div className="flex min-h-0 flex-1">
        <LeftColumn />
        <div className="flex w-2.5 shrink-0 justify-center bg-[#e8e8e8] pt-3.5">
          <Caret className="h-[5px] w-2 rotate-90 text-[#aaa]" />
        </div>
        <div className="flex min-w-0 flex-1 flex-col">
          <FileTabs />
          <DesignerHeader />
          <div className="flex min-h-0 flex-1">
            <LayerPanel />
            <ComponentBar />
            <CanvasArea />
            <PropertyPanel />
          </div>
        </div>
      </div>
      <Watermarks />
      <HelpButton />
      <Annotations />
    </div>
  );
}
